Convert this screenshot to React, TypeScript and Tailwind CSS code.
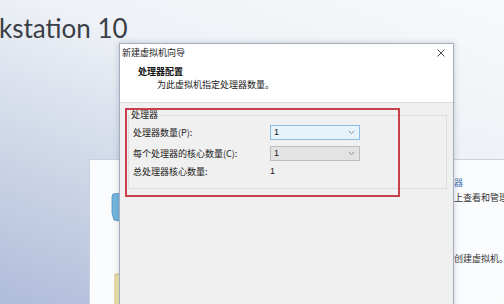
import React from "react";

const cjk = { fontFamily: '"Noto Sans CJK SC", "Microsoft YaHei", sans-serif' };

function Chevron() {
  return (
    <svg width="7" height="5" viewBox="0 0 7 5" className="shrink-0">
      <path d="M0.8 1 L3.5 3.6 L6.2 1" fill="none" stroke="#8a8a8a" strokeWidth="1" />
    </svg>
  );
}

function Select({ active }: { active?: boolean }) {
  return (
    <div
      className={
        "w-[90px] h-[15px] flex items-center justify-between pl-[3px] pr-[4px] border " +
        (active ? "bg-[#e6f3fb] border-[#8bbbe6]" : "bg-[#e3e3e3] border-[#bdbdbd]")
      }
    >
      <span className="text-[9px] leading-none text-[#1a1a1a]" style={{ fontFamily: '"Liberation Sans", Arial, sans-serif' }}>1</span>
      <Chevron />
    </div>
  );
}

export default function App() {
  return (
    <div
      className="relative w-[504px] h-[304px] overflow-hidden bg-[linear-gradient(200deg,#f8f9fb_0%,#eef1f6_35%,#d0d8e8_65%,#afbcda_100%)]"
      style={cjk}
    >
      {/* App title */}
      <div
        className="absolute left-[-1px] top-[15px] text-[26px] leading-[26px] font-normal text-[#3a3e46]"
        style={{ fontFamily: "Lato, sans-serif" }}
      >
        kstation 10
      </div>

      {/* Background window (home page) */}
      <div className="absolute left-[89px] top-[159px] w-[430px] h-[160px] bg-[#fbfcfd] border-l border-t border-[#c9cfdb]">
        <div className="flex flex-col pl-[310px] pt-[17px] text-[9px] leading-[12px] text-[#333] whitespace-nowrap">
          <span className="text-[#3d6fb0]">连接远程服务器</span>
          <span className="mt-[3px]">可在远程主机上查看和管理</span>
          <span className="mt-[49px] pl-[18px]">单击此处创建虚拟机。</span>
        </div>
        {/* blue icon */}
        <svg className="absolute left-[21px] top-[33px]" width="10" height="30" viewBox="0 0 10 30">
          <path d="M2 1 L9 0 L9 28 L3 27 L1 20 L1 4 Z" fill="#73b6e0" stroke="#4f8db8" strokeWidth="0.8" />
        </svg>
        {/* yellow icon */}
        <svg className="absolute left-[24px] top-[113px]" width="8" height="40" viewBox="0 0 8 40">
          <path d="M1 1 L7 1 L7 40 L1 40 Z" fill="#efe5a8" stroke="#c9b872" strokeWidth="0.8" />
        </svg>
        <div className="absolute right-[0px] bottom-[-20px] w-[40px] h-[60px] bg-[linear-gradient(135deg,transparent_45%,#ffffff_50%,transparent_60%)]" />
      </div>

      {/* Wizard dialog */}
      <div className="absolute left-[119px] top-[43px] w-[335px] h-[280px] border border-[#a5aebf] bg-[#f0f0f0] shadow-[0_0_6px_rgba(60,70,100,0.25)]">
        <div className="h-[59px] bg-white border-b border-[#dcdcdc] flex flex-col">
          <div className="h-[17px] flex items-center justify-between pl-[2px] pr-[8px]">
            <span className="text-[9px] leading-none text-[#222]">新建虚拟机向导</span>
            <svg width="8" height="8" viewBox="0 0 8 8">
              <path d="M0.5 0.5 L7.5 7.5 M7.5 0.5 L0.5 7.5" stroke="#333" strokeWidth="0.9" />
            </svg>
          </div>
          <div className="mt-[5px] pl-[18px] text-[9px] leading-[12px] font-bold text-[#111]">处理器配置</div>
          <div className="mt-[1px] pl-[37px] text-[9px] leading-[12px] text-[#222]">为此虚拟机指定处理器数量。</div>
        </div>

        <fieldset className="ml-[8px] mt-[6px] w-[319px] h-[80px] border border-[#dcdcdc] p-0">
          <legend className="ml-[1px] px-[1px] text-[9px] leading-[12px] text-[#222]">处理器</legend>
          <div className="flex flex-col pl-[4px] pt-[4px] text-[9px] text-[#222]">
            <div className="flex items-center h-[15px]">
              <span className="w-[137px]">处理器数量(P):</span>
              <Select active />
            </div>
            <div className="flex items-center h-[15px] mt-[6px]">
              <span className="w-[137px]">每个处理器的核心数量(C):</span>
              <Select />
            </div>
            <div className="flex items-center h-[14px] mt-[4px]">
              <span className="w-[137px]">总处理器核心数量:</span>
              <span style={{ fontFamily: '"Liberation Sans", Arial, sans-serif' }}>1</span>
            </div>
          </div>
        </fieldset>

        {/* red annotation */}
        <div className="absolute left-[5px] top-[64px] w-[275px] h-[89px] border-2 border-[#c8404c]" />
      </div>
    </div>
  );
}
